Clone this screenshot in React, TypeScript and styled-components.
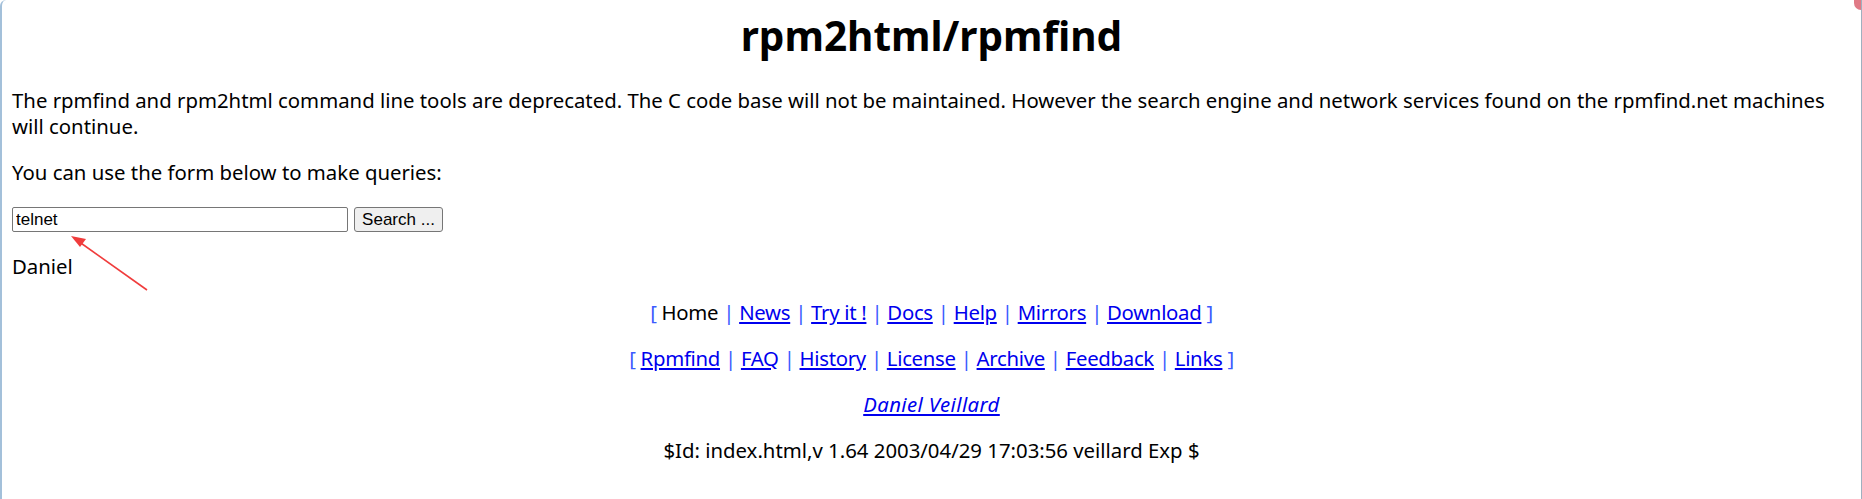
import styled, { createGlobalStyle } from "styled-components";

const GlobalReset = createGlobalStyle`
  html, body { margin: 0; padding: 0; background: #ffffff; }
  body {
    font-family: "Noto Sans", "Open Sans", sans-serif;
    font-size: 20.35px;
    line-height: 26px;
    color: #000;
  }
`;

const Frame = styled.div`
  position: relative;
  box-sizing: border-box;
  height: 499px;
  overflow: hidden;
  border-left: 2px solid #a3c0da;
  border-right: 1px solid #9fb0bf;
  border-top-left-radius: 6px;
  padding: 10px 10px 0;
`;

const CloseCorner = styled.span`
  position: absolute;
  top: -6px;
  right: 0;
  width: 7px;
  height: 16px;
  border-radius: 0 0 0 7px;
  background: #e07a86;
`;

const Title = styled.h1`
  margin: 0 0 25px;
  font-size: 40.5px;
  line-height: 52px;
  font-weight: 700;
  text-align: center;
`;

const Para = styled.p<{ $center?: boolean }>`
  margin: 0 0 20px;
  text-align: ${({ $center }) => ($center ? "center" : "left")};
`;

const SearchForm = styled.form`
  display: flex;
  align-items: center;
  gap: 6px;
  margin: 22px 0 21px;
`;

const TextInput = styled.input`
  box-sizing: border-box;
  width: 336px;
  height: 25px;
  margin: 0;
  padding: 0 3px;
  border: 1px solid #767676;
  border-radius: 2px;
  font-family: "Liberation Sans", Arial, sans-serif;
  font-size: 17px;
  color: #000;
  background: #fff;
  outline: none;
`;

const SearchButton = styled.button`
  box-sizing: border-box;
  width: 89px;
  height: 25px;
  margin: 0;
  padding: 0;
  border: 1px solid #767676;
  border-radius: 3px;
  background: #efefef;
  font-family: "Liberation Sans", Arial, sans-serif;
  font-size: 17px;
  color: #000;
`;

const Nav = styled.p`
  margin: 0 0 20px;
  text-align: center;
  color: #3b5bff;
  letter-spacing: -0.3px;
`;

const NavLink = styled.a`
  color: #0000ee;
  text-decoration: underline;
`;

const Current = styled.span`
  color: #000;
`;

const Author = styled.a`
  color: #0000ee;
  font-style: italic;
  text-decoration: underline;
  letter-spacing: 0.4px;
`;

const Annotation = styled.svg`
  position: absolute;
  left: 0;
  top: 0;
  pointer-events: none;
`;

const navTop = ["News", "Try it !", "Docs", "Help", "Mirrors", "Download"];
const navBottom = ["Rpmfind", "FAQ", "History", "License", "Archive", "Feedback", "Links"];

function NavRow({ current, items }: { current?: string; items: string[] }) {
  const all = current ? [current, ...items] : items;
  return (
    <Nav>
      {"[ "}
      {all.map((name, i) => (
        <span key={name}>
          {i > 0 && " | "}
          {name === current ? <Current>{name}</Current> : <NavLink href="#">{name}</NavLink>}
        </span>
      ))}
      {" ]"}
    </Nav>
  );
}

export default function App() {
  return (
    <>
      <GlobalReset />
      <Frame>
        <CloseCorner />
        <Title>rpm2html/rpmfind</Title>
        <Para>
          The rpmfind and rpm2html command line tools are deprecated. The C code base will not be
          maintained. However the search engine and network services found on the rpmfind.net
          machines will continue.
        </Para>
        <Para>You can use the form below to make queries:</Para>
        <SearchForm onSubmit={(e) => e.preventDefault()}>
          <TextInput defaultValue="telnet" />
          <SearchButton type="submit">Search ...</SearchButton>
        </SearchForm>
        <Para>Daniel</Para>
        <NavRow current="Home" items={navTop} />
        <NavRow items={navBottom} />
        <Para $center>
          <Author href="#">Daniel Veillard</Author>
        </Para>
        <Para $center>$Id: index.html,v 1.64 2003/04/29 17:03:56 veillard Exp $</Para>
        <Annotation width="160" height="300" viewBox="0 0 160 300">
          <line x1="145" y1="290" x2="76" y2="241" stroke="#f03c3c" strokeWidth="1.6" />
          <polygon points="69,236 84,239 78,247" fill="#f03c3c" />
        </Annotation>
      </Frame>
    </>
  );
}
